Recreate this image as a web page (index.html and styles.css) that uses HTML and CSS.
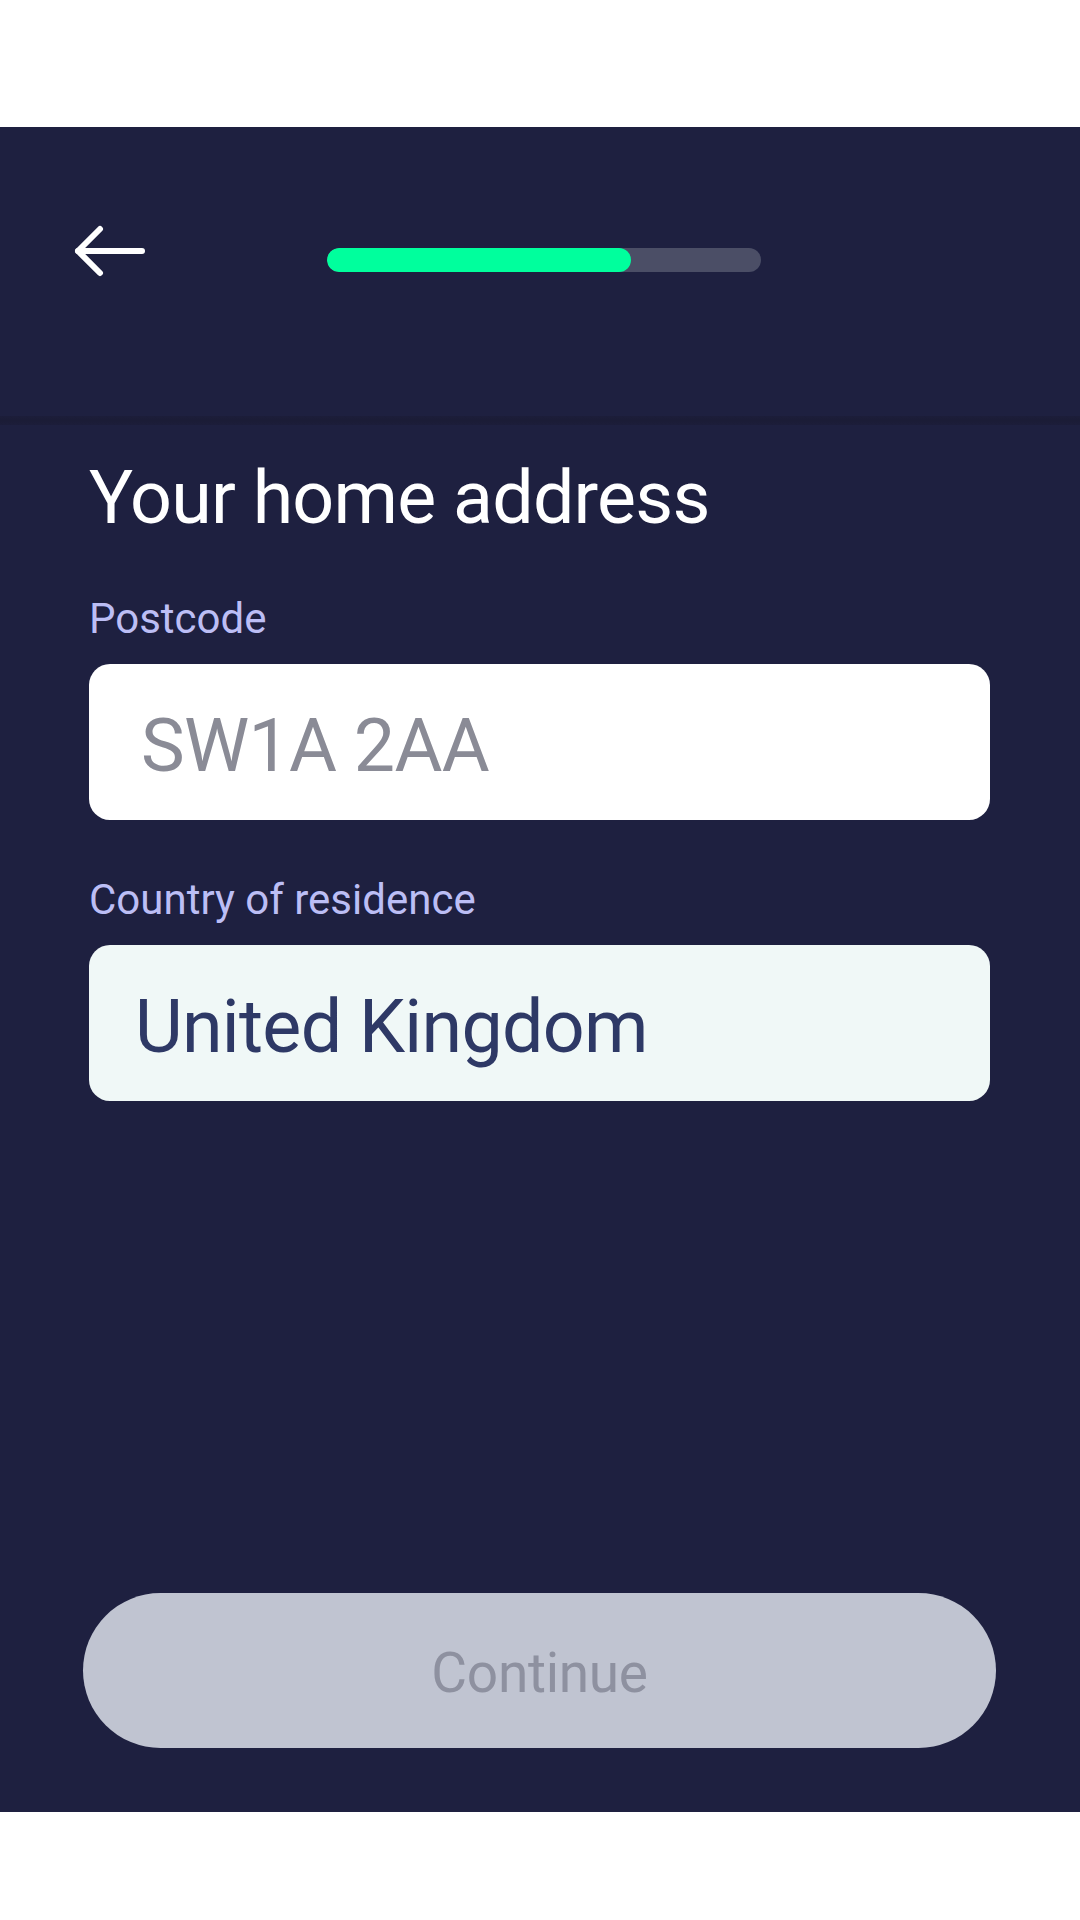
FILE: index.html
```html
<!DOCTYPE html>
<html lang="en">
<head>
<meta charset="utf-8">
<title>Your home address</title>
<link rel="stylesheet" href="styles.css">
</head>
<body>
<div class="status-space"></div>
<main class="screen">
  <header class="header">
    <button class="back" aria-label="Back">
      <svg width="80" height="62" viewBox="0 0 80 62" fill="none" stroke="#ffffff" stroke-width="6" stroke-linecap="round" stroke-linejoin="round">
        <path d="M28 9 L6 31 L28 53"/>
        <path d="M6 31 L70 31"/>
      </svg>
    </button>
    <div class="progress"><div class="progress-fill" style="width:70%"></div></div>
  </header>
  <div class="shadow"></div>
  <section class="content">
    <h1 class="title">Your home address</h1>
    <label class="label">Postcode</label>
    <div class="field field-input"><span class="placeholder">SW1A 2AA</span></div>
    <label class="label label-gap">Country of residence</label>
    <div class="field field-select"><span class="value">United Kingdom</span></div>
  </section>
  <div class="actions">
    <button class="continue" disabled>Continue</button>
  </div>
</main>
</body>
</html>
```

FILE: styles.css
```css
* { box-sizing: border-box; }

html, body {
  margin: 0;
  padding: 0;
  background: #ffffff;
  font-family: Roboto, "Noto Sans", "Liberation Sans", sans-serif;
}

.status-space {
  height: 127px;
  background: #ffffff;
}

.screen {
  height: 1685px;
  background: #1e2040;
  display: flex;
  flex-direction: column;
}

.header {
  height: 289px;
  display: flex;
  align-items: flex-start;
  padding: 93px 0 0 72px;
}

.back {
  display: block;
  width: 80px;
  height: 62px;
  padding: 0;
  margin: 0;
  border: 0;
  background: transparent;
}

.back svg { display: block; }

.progress {
  width: 434px;
  height: 24px;
  margin: 28px 0 0 175px;
  border-radius: 12px;
  background: #4b4e66;
  overflow: hidden;
}

.progress-fill {
  height: 100%;
  border-radius: 12px;
  background: #00ff9d;
}

.shadow {
  height: 9px;
  background: linear-gradient(to bottom, #1c1d3a, #1b1c36 50%, #1c1d3a);
}

.content {
  padding: 30px 90px 0 89px;
  display: flex;
  flex-direction: column;
}

.title {
  margin: 0;
  font-size: 73.5px;
  line-height: 86px;
  font-weight: 400;
  letter-spacing: -0.75px;
  color: #ffffff;
}

.label {
  display: block;
  margin-top: 53px;
  font-size: 42px;
  line-height: 49px;
  color: #bcbef5;
}

.label-gap { margin-top: 55px; }

.field {
  margin-top: 21px;
  height: 156px;
  border-radius: 21px;
  display: flex;
  align-items: center;
  padding-top: 8px;
  font-size: 73.5px;
  line-height: 86px;
  letter-spacing: -0.7px;
}

.field-input {
  background: #ffffff;
  padding-left: 52px;
}

.placeholder { color: #8a8b96; }

.field-select {
  background: #f0f8f7;
  padding-left: 46px;
}

.value { color: #2e3966; }

.actions {
  margin-top: auto;
  padding: 0 84px 64px 83px;
}

.continue {
  display: block;
  width: 100%;
  height: 155px;
  border: 0;
  border-radius: 78px;
  background: #c0c4d1;
  color: #8e91a0;
  font-family: Roboto, "Noto Sans", "Liberation Sans", sans-serif;
  font-size: 55px;
  line-height: 64px;
  letter-spacing: -0.3px;
  padding: 4px 0 0 0;
}
```
